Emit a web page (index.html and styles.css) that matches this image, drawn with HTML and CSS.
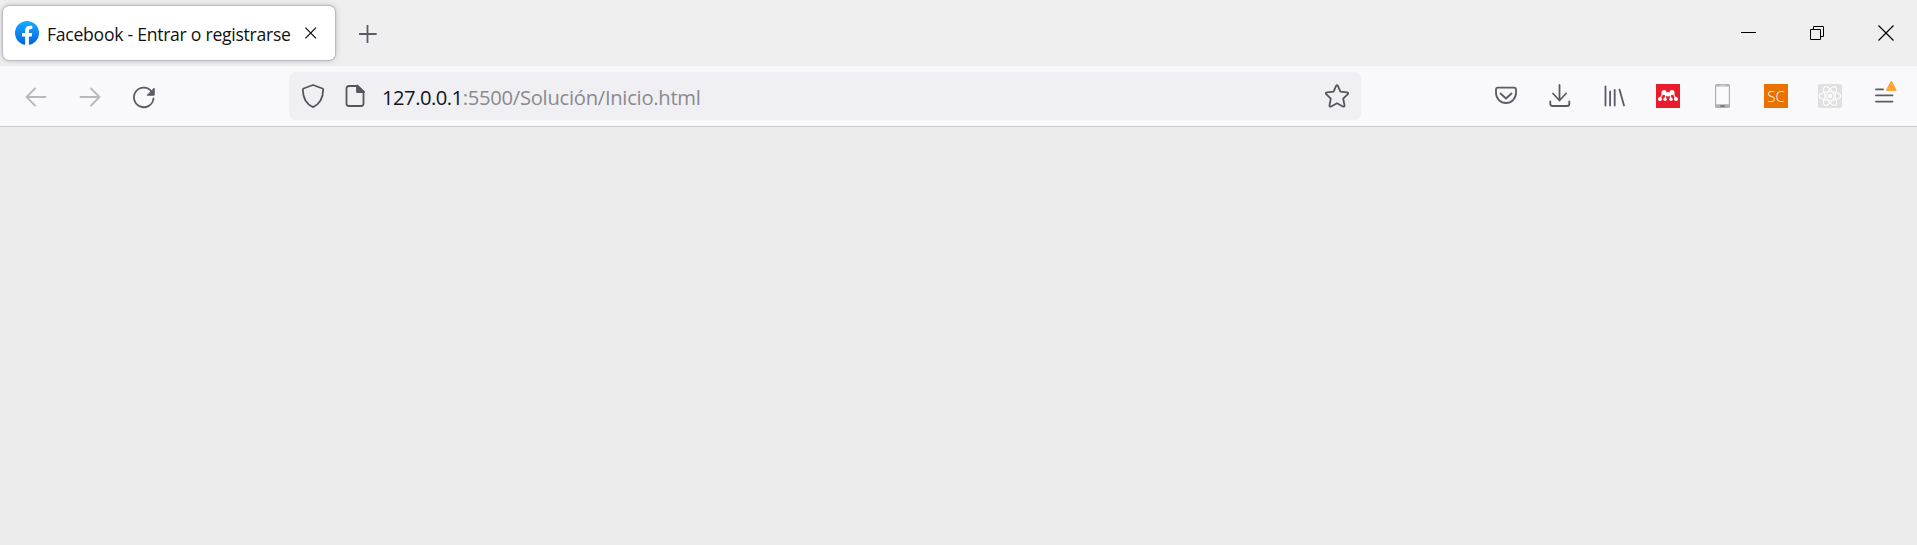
FILE: index.html
```html
<!DOCTYPE html>
<html lang="es">
<head>
<meta charset="utf-8">
<title>Facebook - Entrar o registrarse</title>
<link rel="stylesheet" href="styles.css">
</head>
<body>
<header class="tabs">
  <div class="tab">
    <svg class="favicon" viewBox="0 0 24 24"><defs><linearGradient id="fb" x1="0" y1="0" x2="0" y2="1"><stop offset="0" stop-color="#18acfe"/><stop offset="1" stop-color="#0163e0"/></linearGradient></defs><circle cx="12" cy="12" r="12" fill="url(#fb)"/><path fill="#fff" d="M16.7 15.5 17.2 12H13.9V9.8c0-1 .5-1.900 1.900-1.900h1.500V4.900s-1.400-.2-2.700-.2c-2.700 0-4.500 1.700-4.500 4.700V12H7v3.500h3.100V24h3.800v-8.500z"/></svg>
    <span class="tab-title">Facebook - Entrar o registrarse</span>
    <svg class="tab-close" viewBox="0 0 12 12"><path d="M.4.6L11 11.400M11 .6L.4 11.400" stroke="#111" stroke-width="1.300"/></svg>
  </div>
  <svg class="new-tab" viewBox="0 0 18 18"><path d="M8.500 .5v17M0 9h17" stroke="#5b5b66" stroke-width="1.800" stroke-linecap="round"/></svg>
  <div class="window-controls">
    <svg width="69" height="66"><path d="M27 32.500h15" stroke="#000"/></svg>
    <svg width="69" height="66" fill="none" stroke="#000"><path d="M27.500 29.500h10v10h-10zM30.500 29.500v-3h10v10h-3"/></svg>
    <svg width="65" height="66"><path d="M26.500 25.500l15 15M41.500 25.500l-15 15" stroke="#000" stroke-width="1.200"/></svg>
  </div>
</header>
<nav class="toolbar">
  <div class="group nav-buttons">
    <svg class="icon faded"><path d="M36.500 31H18M26 22.500L17.500 31l8.500 8.500"/></svg>
    <svg class="icon faded"><path d="M17.500 31H36M28 22.500l8.500 8.500-8.500 8.500"/></svg>
    <svg class="icon"><path d="M34.800 25.800A9.800 9.800 0 1 0 36.500 32.500"/><path class="solid" stroke-width="1" d="M37.200 22.500v6.700h-6.700z"/></svg>
  </div>
  <div class="urlbar">
    <svg class="shield" viewBox="0 0 24 26"><path d="M12 2L21.500 5.500c.5.200.7.600.7 1.100C22 15 19.500 21 12 24.200 4.500 21 2 15 1.800 6.600c0-.5.200-.9.700-1.100z"/></svg>
    <svg class="page" viewBox="0 0 20 24"><path d="M12.500 2H4a2.500 2.500 0 0 0-2.500 2.500v15A2.500 2.500 0 0 0 4 22h12a2.500 2.500 0 0 0 2.500-2.500V8z"/><path class="solid" d="M12 1.500V8h7z"/></svg>
    <span class="url"><b>127.0.0.1</b>:5500/Solución/Inicio.html</span>
    <svg class="star" viewBox="0 0 26 26"><path d="M12.100 2.900q.9-1.500 1.800 0l2.500 5.700 6.700.7q1.800.5.700 1.900l-4.600 4.500 1.300 6.700q0 1.700-1.600 1.100L13 20.200l-5.900 3.300q-1.600.6-1.600-1.100l1.300-6.700-4.600-4.500q-1.100-1.400.7-1.900l6.700-.7z"/></svg>
  </div>
  <div class="group actions">
    <svg class="icon"><path d="M19 21.700h16q2 0 2 2V27a10 10 0 0 1-20 0v-3.300q0-2 2-2zM21.500 27.500l5.500 5 5.500-5"/></svg>
    <svg class="icon"><path d="M26.500 19v15.500M20 27.500l6.500 7 6.500-7M17.300 35.500v2.200q0 2.300 2.300 2.300h14.400q2.300 0 2.300-2.300v-2.200"/></svg>
    <svg class="icon"><path d="M18.500 20.500v19M23.100 25.500v14M27.700 23.800v15.700M32.500 23.500l4.500 16"/></svg>
    <svg class="icon"><path fill="#e91c2d" stroke="none" d="M15 18h24v24H15z"/><g fill="#fff" stroke="none"><circle cx="23" cy="26.500" r="2.500"/><circle cx="31" cy="26.500" r="2.500"/><circle cx="27" cy="28.300" r="2.300"/><circle cx="19" cy="33" r="2"/><circle cx="35" cy="33" r="2"/><circle cx="24" cy="33.300" r="1.700"/><circle cx="30" cy="33.300" r="1.700"/></g><path d="M19.300 32q1.600-1.500 2.200-5M34.700 32q-1.600-1.500-2.200-5M24.500 28.500V33M29.500 28.500V33" stroke="#fff" stroke-width="1.200"/></svg>
    <svg class="icon"><rect x="20" y="18" width="15" height="24" rx="1.500" fill="#b1b1b1" stroke="none"/><path fill="#fafafa" stroke="none" d="M21.200 20.500h12.600v17.700H21.200z"/><path d="M25 19.300h5" stroke="#ddd" stroke-width=".8"/><path d="M26 40.200h3" stroke="#777" stroke-width="1.800"/></svg>
    <span class="icon badge-cell"><span class="sc">SC</span></span>
    <svg class="icon"><rect x="15" y="18" width="24" height="24" rx="2" fill="#e0e0e0" stroke="none"/><g class="orbits"><ellipse cx="27" cy="30" rx="10.700" ry="4.200"/><ellipse cx="27" cy="30" rx="10.700" ry="4.200" transform="rotate(60 27 30)"/><ellipse cx="27" cy="30" rx="10.700" ry="4.200" transform="rotate(120 27 30)"/></g><circle cx="27" cy="30" r="2.300" fill="#fff" stroke="none"/></svg>
    <svg class="icon"><path d="M19 23.400h7M19 29.400h16.500M19 35.600h16.500"/><path d="M34.700 15.800l4.300 7.900q.3.800-.5.800h-8.400q-.8 0-.5-.8l4.300-7.900q.4-.6.800 0z" fill="#ffa436" stroke="#ffa436" stroke-width="1"/></svg>
  </div>
</nav>
<main class="content"></main>
</body>
</html>
```
FILE: styles.css
```css
* { box-sizing: border-box; }
body {
  margin: 0;
  height: 545px;
  display: flex;
  flex-direction: column;
  overflow: hidden;
  font-family: "Open Sans", "Noto Sans", sans-serif;
  background: #ebebec;
}
svg { display: block; flex: none; }
.tabs {
  height: 66px;
  flex: none;
  display: flex;
  align-items: center;
  padding-left: 3px;
  background: #efefef;
}
.tab {
  width: 332px;
  height: 54px;
  flex: none;
  display: flex;
  align-items: center;
  padding-left: 12px;
  border-radius: 6px;
  background: #fff;
  box-shadow: 0 0 1px 1px #b9b8c2, 0 0 6px rgba(128, 128, 142, .5);
}
.favicon { width: 24px; height: 24px; }
.tab-title {
  width: 243px;
  margin-left: 8px;
  padding-top: 1px;
  font-size: 17.6px;
  letter-spacing: -.27px;
  line-height: 24px;
  white-space: nowrap;
  color: #111;
}
.tab-close { width: 12px; height: 12px; margin-left: 15px; }
.new-tab { width: 18px; height: 18px; margin: 2px 0 0 24px; }
.window-controls { display: flex; margin-left: auto; }
.toolbar {
  height: 61px;
  flex: none;
  display: flex;
  align-items: flex-start;
  padding: 0 6px 0 9px;
  background: #f9f9fb;
  border-bottom: 1px solid #cbcbcf;
}
.group { display: flex; }
.nav-buttons { margin-right: 118px; }
.actions { margin-left: auto; }
.icon {
  width: 54px;
  height: 60px;
  fill: none;
  stroke: #5b5b66;
  stroke-width: 1.8;
  stroke-linecap: round;
  stroke-linejoin: round;
}
.faded { stroke: #b8b8bd; }
.solid { fill: #5b5b66; }
.orbits { stroke: #fff; stroke-width: 1.1; }
.urlbar {
  width: 1072px;
  height: 48px;
  margin-top: 6px;
  padding: 0 11px 0 12px;
  display: flex;
  align-items: center;
  border-radius: 6px;
  background: #f0f0f4;
  fill: none;
  stroke: #55555c;
  stroke-width: 1.8;
  stroke-linejoin: round;
}
.shield { width: 24px; height: 26px; }
.page { width: 20px; height: 24px; margin-left: 20px; }
.url {
  margin-left: 17px;
  padding-top: 1px;
  font-size: 20.2px;
  line-height: 28px;
  letter-spacing: -.27px;
  white-space: nowrap;
  color: #8a8a8e;
}
.url b { font-weight: 400; letter-spacing: -.5px; color: #15141a; }
.star { width: 26px; height: 26px; margin-left: auto; }
.badge-cell { display: flex; align-items: center; justify-content: center; }
.sc {
  width: 24px;
  height: 24px;
  background: #eb7100;
  color: #fff;
  font-size: 15px;
  font-weight: 300;
  line-height: 24px;
  text-align: center;
}
.content { flex: 1; background: #ebebec; }
```
